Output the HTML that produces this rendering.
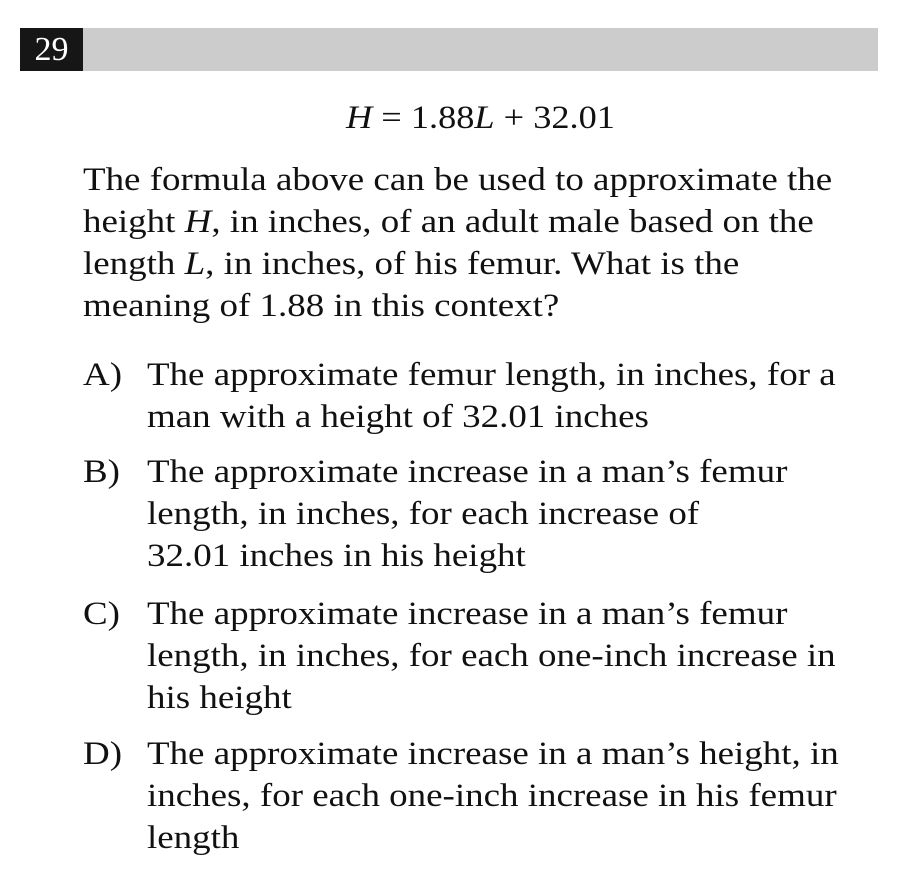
<!DOCTYPE html>
<html><head><meta charset="utf-8"><style>
body{margin:0;width:906px;height:888px;background:#fff;position:relative;font-family:"Liberation Serif",serif;color:#111;overflow:hidden}
.l{position:absolute;white-space:nowrap;font-size:33px;line-height:40px;transform:scaleX(1.12);transform-origin:0 0}
#bar{position:absolute;left:20px;top:28px;width:858px;height:43px;background:#cccccc}
#num{position:absolute;left:20px;top:28px;width:63px;height:43px;background:#161616;color:#fff;font-size:34px;line-height:43px;text-align:center}
i{font-style:italic}
</style></head><body>
<div id="bar"></div><div id="num">29</div>
<div class="l" style="left:346px;top:98px;transform:scaleX(1.1)"><i>H</i> = 1.88<i>L</i> + 32.01</div>
<div class="l" style="left:83px;top:160px">The formula above can be used to approximate the</div>
<div class="l" style="left:83px;top:202px">height <i>H</i>, in inches, of an adult male based on the</div>
<div class="l" style="left:83px;top:244px">length <i>L</i>, in inches, of his femur. What is the</div>
<div class="l" style="left:83px;top:286px">meaning of 1.88 in this context?</div>
<div class="l" style="left:83px;top:355px">A)</div>
<div class="l" style="left:147px;top:355px">The approximate femur length, in inches, for a</div>
<div class="l" style="left:147px;top:397px">man with a height of 32.01 inches</div>
<div class="l" style="left:83px;top:452px">B)</div>
<div class="l" style="left:147px;top:452px">The approximate increase in a man’s femur</div>
<div class="l" style="left:147px;top:494px">length, in inches, for each increase of</div>
<div class="l" style="left:147px;top:536px">32.01 inches in his height</div>
<div class="l" style="left:83px;top:594px">C)</div>
<div class="l" style="left:147px;top:594px">The approximate increase in a man’s femur</div>
<div class="l" style="left:147px;top:636px">length, in inches, for each one-inch increase in</div>
<div class="l" style="left:147px;top:678px">his height</div>
<div class="l" style="left:83px;top:734px">D)</div>
<div class="l" style="left:147px;top:734px">The approximate increase in a man’s height, in</div>
<div class="l" style="left:147px;top:776px">inches, for each one-inch increase in his femur</div>
<div class="l" style="left:147px;top:818px">length</div>
</body></html>
